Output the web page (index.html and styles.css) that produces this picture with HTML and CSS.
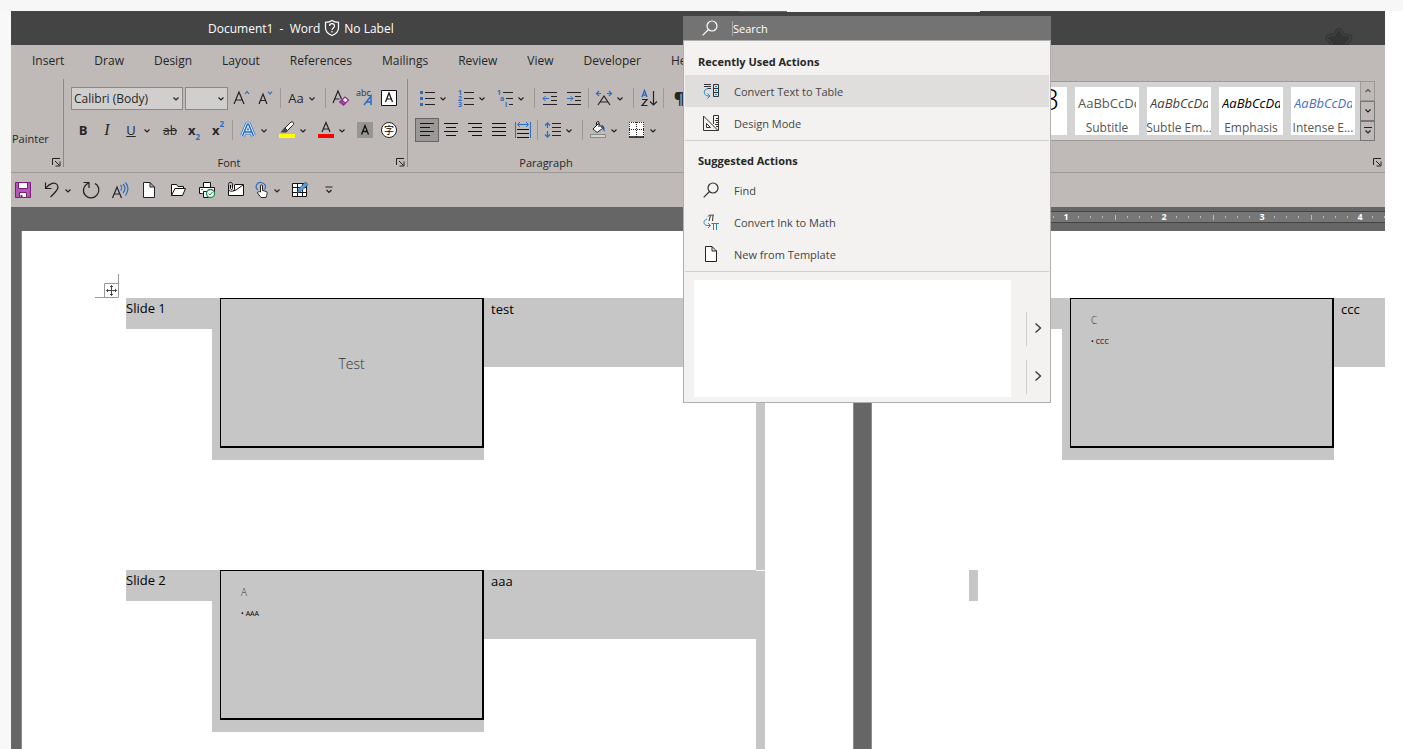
FILE: index.html
```html
<!DOCTYPE html>
<html lang="en">
<head>
    <meta charset="UTF-8">
    <meta name="viewport" content="width=device-width, initial-scale=1.0">
    <title>Document1 - Word</title>
    <link rel="stylesheet" href="styles.css">
</head>
<body>

    <svg class="sprite" aria-hidden="true">
        <symbol id="chev" viewBox="0 0 8 8"><path d="M1.5 2.5 4 5l2.5-2.5" fill="none" stroke="#222" stroke-width="1.2"/></symbol>
        <symbol id="launch" viewBox="0 0 9 9"><path d="M.5 7V.5H8M3 3l4 4M8 3.500V8H3.500" fill="none" stroke="#222"/></symbol>
        <symbol id="lens" viewBox="0 0 16 16"><circle cx="10" cy="6" r="5"/><path d="M6.500 9.500.7 15.300"/></symbol>
        <symbol id="file" viewBox="0 0 16 16"><path d="M2.500.5H9l4.500 4.500v10.500h-11zM9 .5V5h4.500" fill="#fff" stroke="#222"/></symbol>
    </svg>

    <div class="app">
        <header class="titlebar">
            <span>Document1&nbsp; -&nbsp; Word</span>
            <svg class="shield" width="16" height="18" viewBox="0 0 16 18" fill="none" stroke="#fff" stroke-width="1.200"><path d="M8 1.500C6 3 4 3.300 1.500 3.300V9c0 4 3 6 6.500 7.500C11.500 15 14.500 13 14.500 9V3.300C12 3.300 10 3 8 1.500z"/><path d="M5.500 7c0-3.200 5-3.200 5 0 0 2-2.500 2-2.500 4M8 12v1.500"/></svg>
            <span>No Label</span>
            <svg class="star" width="28" height="18" viewBox="0 0 28 18" stroke-linejoin="round"><path d="m14 5 3 5 6.500 1-4.500 4.500 1 6.500H8l1-6.500L4.500 11l6.500-1z" fill="#343434" stroke="#363636" stroke-width="8"/><path d="m14 5 3 5 6.500 1-4.500 4.500 1 6.500H8l1-6.500L4.500 11l6.500-1z" fill="#343434" stroke="#464646" stroke-width="5"/><path d="m14 5 3 5 6.500 1-4.500 4.500 1 6.500H8l1-6.500L4.500 11l6.500-1z" fill="#343434" stroke="#343434" stroke-width="3"/></svg>
        </header>

        <nav class="tabs">
            <a href="#">Insert</a>
            <a href="#">Draw</a>
            <a href="#">Design</a>
            <a href="#">Layout</a>
            <a href="#">References</a>
            <a href="#">Mailings</a>
            <a href="#">Review</a>
            <a href="#">View</a>
            <a href="#">Developer</a>
            <a href="#">Help</a>
        </nav>

        <div class="ribbon">
            <section class="group clipboard">
                <button class="painter">Painter</button>
                <div class="caption"><button class="launcher" aria-label="Clipboard settings"><svg width="9" height="9"><use href="#launch"/></svg></button></div>
            </section>

            <section class="group">
                <div class="row">
                    <span class="combo combo-font">
                        <select aria-label="Font"><option>Calibri (Body)</option></select>
                        <svg width="8" height="8"><use href="#chev"/></svg>
                    </span>
                    <span class="combo combo-size">
                        <select aria-label="Font size"><option></option></select>
                        <svg width="8" height="8"><use href="#chev"/></svg>
                    </span>
                    <button class="tool" aria-label="Grow font"><svg width="18" height="18" viewBox="0 0 18 18" fill="none" stroke="#222" stroke-width="1.200"><path d="M1 15 6 3l5 12M3 11h6"/><path d="m12 5 2-2.500L16 5" stroke="#2b6cc4"/></svg></button>
                    <button class="tool" aria-label="Shrink font"><svg width="18" height="18" viewBox="0 0 18 18" fill="none" stroke="#222" stroke-width="1.200"><path d="m2 15 4-10 4 10M3.500 11.500h5"/><path d="m11 2.500 2 2.500 2-2.500" stroke="#2b6cc4"/></svg></button>
                    <i class="sep"></i>
                    <span class="split"><button class="tool case">Aa</button><button class="arrow" aria-label="Case options"><svg width="8" height="8"><use href="#chev"/></svg></button></span>
                    <i class="sep"></i>
                    <button class="tool" aria-label="Clear formatting"><svg width="18" height="18" viewBox="0 0 18 18" fill="none" stroke="#222" stroke-width="1.200"><path d="M1 14 6 2l3.500 8M3 10h4.500"/><path d="m8 13 5-5 3.500 3-5 5z" fill="#fff" stroke="#92278f"/><path d="m8 13 2-2 3.500 3-2 2z" fill="#b14fb0" stroke="#92278f"/></svg></button>
                    <button class="tool" aria-label="Text styling"><svg width="20" height="20" viewBox="0 0 20 20"><text class="ico-abc" x="1" y="8">abc</text><path d="m9 17 7-9v9M11.500 14H16" fill="none" stroke="#2b6cc4" stroke-width="1.500"/></svg></button>
                    <button class="tool" aria-label="Character border"><svg width="18" height="18" viewBox="0 0 18 18" fill="none" stroke="#111"><path d="M1.500 1.500h15v15h-15z" fill="#fff"/><path d="M5.500 13 9 4l3.500 9M6.700 10h4.600" stroke-width="1.200"/></svg></button>
                </div>
                <div class="row">
                    <button class="tool bold">B</button>
                    <button class="tool italic">I</button>
                    <span class="split"><button class="tool underline">U</button><button class="arrow" aria-label="Underline options"><svg width="8" height="8"><use href="#chev"/></svg></button></span>
                    <button class="tool strike">ab</button>
                    <button class="tool bold">x<sub>2</sub></button>
                    <button class="tool bold">x<sup>2</sup></button>
                    <i class="sep"></i>
                    <span class="split"><button class="tool" aria-label="Text effects"><svg width="18" height="18" viewBox="0 0 18 18" fill="none" stroke-linejoin="round"><path d="m3.500 15 5-12h1l5 12M5.500 11h7" stroke="#4a8fdc" stroke-width="5"/><path d="m3.500 15 5-12h1l5 12M5.500 11h7" stroke="#fff" stroke-width="3"/><path d="m3.500 15 5-12h1l5 12M5.500 11h7" stroke="#2b66b8" stroke-width="1.500"/></svg></button><button class="arrow" aria-label="Effect options"><svg width="8" height="8"><use href="#chev"/></svg></button></span>
                    <span class="split"><button class="tool" aria-label="Highlight"><svg width="18" height="18" viewBox="0 0 18 18"><path d="M1 13h16v4H1z" fill="#ff0"/><path d="m7 7 6-6c2-.5 3 .5 2.500 2.500l-6 6z" fill="#fff" stroke="#222"/><path d="m6.500 6.500 3.500 3.500-2 1.500H2.500z" fill="#444"/></svg></button><button class="arrow" aria-label="Highlight options"><svg width="8" height="8"><use href="#chev"/></svg></button></span>
                    <span class="split"><button class="tool" aria-label="Font color"><svg width="18" height="18" viewBox="0 0 18 18"><path d="M1 13h16v4H1z" fill="red"/><path d="M5 11 9 1.500 13 11M6.500 8h5" fill="none" stroke="#222" stroke-width="1.200"/></svg></button><button class="arrow" aria-label="Color options"><svg width="8" height="8"><use href="#chev"/></svg></button></span>
                    <button class="tool" aria-label="Character shading"><svg width="18" height="18" viewBox="0 0 18 18"><path d="M1 1h16v16H1z" fill="#989694"/><path d="M5.500 13.500 9 4.500l3.500 9M6.700 10.500h4.600" fill="none" stroke="#111" stroke-width="1.300"/></svg></button>
                    <button class="tool" aria-label="Enclose characters"><svg width="18" height="18" viewBox="0 0 18 18"><circle cx="9" cy="9" r="7.500" fill="#fff" stroke="#222"/><text class="ico-cjk" x="9" y="13">字</text></svg></button>
                </div>
                <div class="caption">Font <button class="launcher" aria-label="Font settings"><svg width="9" height="9"><use href="#launch"/></svg></button></div>
            </section>

            <section class="group">
                <div class="row">
                    <span class="split"><button class="tool" aria-label="Bullets"><svg width="18" height="18" viewBox="0 0 18 18"><path d="M2 2h3v3H2zM2 8h3v3H2zM2 14h3v3H2z" fill="#2b6cc4"/><path d="M7 3.500h10M7 9.500h10M7 15.500h10" stroke="#222"/></svg></button><button class="arrow" aria-label="Bullet options"><svg width="8" height="8"><use href="#chev"/></svg></button></span>
                    <span class="split"><button class="tool" aria-label="Numbering"><svg width="18" height="22" viewBox="0 -2 18 22"><text class="ico-num" x="1" y="6">1</text><text class="ico-num" x="1" y="12">2</text><text class="ico-num" x="1" y="18">3</text><path d="M7 3.500h10M7 9.500h10M7 15.500h10" stroke="#222"/></svg></button><button class="arrow" aria-label="Numbering options"><svg width="8" height="8"><use href="#chev"/></svg></button></span>
                    <span class="split"><button class="tool" aria-label="Multilevel list"><svg width="18" height="22" viewBox="0 -2 18 22"><text class="ico-num" x="1" y="6">1</text><text class="ico-num" x="4" y="12">a</text><text class="ico-num" x="9" y="18">i</text><path d="M7 3.500h10M10 9.500h7M13 15.500h4" stroke="#222"/></svg></button><button class="arrow" aria-label="Multilevel options"><svg width="8" height="8"><use href="#chev"/></svg></button></span>
                    <i class="sep"></i>
                    <button class="tool" aria-label="Decrease indent"><svg width="18" height="18" viewBox="0 0 18 18" fill="none" stroke="#222"><path d="M2 3.500h14M10 7.500h6M10 11.500h6M2 15.500h14"/><path d="M8 9.500H2m2.500-2.500L2 9.500 4.500 12" stroke="#2b6cc4"/></svg></button>
                    <button class="tool" aria-label="Increase indent"><svg width="18" height="18" viewBox="0 0 18 18" fill="none" stroke="#222"><path d="M2 3.500h14M10 7.500h6M10 11.500h6M2 15.500h14"/><path d="M2 9.500h6M5.500 7 8 9.500 5.500 12" stroke="#2b6cc4"/></svg></button>
                    <i class="sep"></i>
                    <span class="split"><button class="tool" aria-label="Asian layout"><svg width="18" height="18" viewBox="0 0 18 18" fill="none" stroke="#222" stroke-width="1.200"><path d="M3 16 9 7l6 9M5 13h8"/><path d="M6 4.500H1.500M4 2 1.500 4.500 4 7M12 4.500h4.500M14 2l2.500 2.500L14 7" stroke="#2b6cc4"/></svg></button><button class="arrow" aria-label="Layout options"><svg width="8" height="8"><use href="#chev"/></svg></button></span>
                    <i class="sep"></i>
                    <button class="tool" aria-label="Sort"><svg width="18" height="18" viewBox="0 0 18 18" fill="none" stroke="#222" stroke-width="1.200"><path d="m2 8 2.500-6.500L7 8M3 6h3" stroke="#2b6cc4" stroke-width="1.400"/><path d="M2 10.500h5l-5 6h5.500M13.500 2v14M10 12.500l3.500 3.500 3.500-3.500"/></svg></button>
                    <i class="sep"></i>
                    <button class="tool pilcrow">¶</button>
                </div>
                <div class="row">
                    <button class="tool pressed" aria-label="Align left"><svg width="18" height="18" viewBox="0 0 18 18" stroke="#111"><path d="M2 2.500h14M2 6.500h10M2 10.500h14M2 14.500h10"/></svg></button>
                    <button class="tool" aria-label="Center"><svg width="18" height="18" viewBox="0 0 18 18" stroke="#111"><path d="M2 2.500h14M4 6.500h10M2 10.500h14M4 14.500h10"/></svg></button>
                    <button class="tool" aria-label="Align right"><svg width="18" height="18" viewBox="0 0 18 18" stroke="#111"><path d="M2 2.500h14M6 6.500h10M2 10.500h14M6 14.500h10"/></svg></button>
                    <button class="tool" aria-label="Justify"><svg width="18" height="18" viewBox="0 0 18 18" stroke="#111"><path d="M2 2.500h14M2 6.500h14M2 10.500h14M2 14.500h14"/></svg></button>
                    <button class="tool" aria-label="Distribute"><svg width="18" height="18" viewBox="0 0 18 18" fill="none" stroke="#111"><path d="M3 8.500h12M3 12.500h12M3 16.500h12"/><path d="M1.500 1v16M16.500 1v16M4 3.500h10M6 1 3.500 3.500 6 6M12 1l2.500 2.500L12 6" stroke="#2b6cc4"/></svg></button>
                    <i class="sep"></i>
                    <span class="split"><button class="tool" aria-label="Line spacing"><svg width="18" height="18" viewBox="0 0 18 18" fill="none" stroke="#222"><path d="M8 2.500h9M8 6.500h9M8 10.500h9M8 14.500h9"/><path d="M3.500 2v5M1 4.500 3.500 2 6 4.500M3.500 10v6M1 13.500 3.500 16 6 13.500" stroke="#2b6cc4" stroke-width="1.300"/></svg></button><button class="arrow" aria-label="Spacing options"><svg width="8" height="8"><use href="#chev"/></svg></button></span>
                    <i class="sep"></i>
                    <span class="split"><button class="tool" aria-label="Shading"><svg width="18" height="18" viewBox="0 0 18 18"><path d="M1.500 13.500h15v3h-15z" fill="#d4d4d4" stroke="#888"/><path d="m4 8 5.500-5.500 4 5L8 11.500z" fill="#fff" stroke="#222"/><path d="M10 6V1.500C10 0 7.500 0 7.500 2v2" fill="none" stroke="#222"/><path d="M12 4c3 0 4 2 3.500 7-1-2-2-3-2-3.500z" fill="#2b579a"/></svg></button><button class="arrow" aria-label="Shading options"><svg width="8" height="8"><use href="#chev"/></svg></button></span>
                    <span class="split"><button class="tool" aria-label="Borders"><svg width="18" height="18" viewBox="0 0 18 18"><path d="M1 1h15v15H1z" fill="#fff"/><path d="M1 1.500h15M1 8.500h15M1.500 1v15M8.500 1v15M15.500 1v15" stroke="#222" stroke-dasharray="1 1"/><path d="M1 16h15" stroke="#111" stroke-width="1.500"/></svg></button><button class="arrow" aria-label="Border options"><svg width="8" height="8"><use href="#chev"/></svg></button></span>
                </div>
                <div class="caption">Paragraph</div>
            </section>

            <section class="group styles">
                <div class="gallery">
                    <button class="style"><span class="sample title">AaB</span><span>Title</span></button>
                    <button class="style"><span class="sample">AaBbCcDd</span><span>Subtitle</span></button>
                    <button class="style"><span class="sample slanted">AaBbCcDd</span><span>Subtle Em...</span></button>
                    <button class="style"><span class="sample slanted strong">AaBbCcDd</span><span>Emphasis</span></button>
                    <button class="style"><span class="sample slanted blue">AaBbCcDd</span><span>Intense E...</span></button>
                    <div class="scroller">
                        <button class="off" aria-label="Previous styles"><svg width="8" height="8" viewBox="0 0 8 8"><path d="M1.500 5 4 2.500 6.500 5" fill="none" stroke="#555" stroke-width="1.200"/></svg></button>
                        <button aria-label="Next styles"><svg width="8" height="8"><use href="#chev"/></svg></button>
                        <button aria-label="More styles"><svg width="8" height="8" viewBox="0 0 8 8"><path d="M0 .5h8M1.500 3.500 4 6l2.500-2.500" fill="none" stroke="#222" stroke-width="1.200"/></svg></button>
                    </div>
                </div>
                <div class="caption"><button class="launcher" aria-label="Style settings"><svg width="9" height="9"><use href="#launch"/></svg></button></div>
            </section>
        </div>

        <div class="quickbar">
            <button class="tool" aria-label="Save"><svg width="18" height="18" viewBox="0 0 18 18" stroke="#7b1f7a"><path d="M1.500 1.500h15v15h-15z" fill="#b455b8"/><path d="M4.500 1.500h9v6h-9zM5.500 11.500h7v5h-7z" fill="#fff"/><path d="M7.500 14v2.500" stroke-width="2"/></svg></button>
            <span class="split"><button class="tool" aria-label="Undo"><svg width="18" height="18" viewBox="0 0 18 18" fill="none" stroke="#222" stroke-width="1.200"><path d="M2.500 1.500v6h6M2.500 7.500C7 1.500 12 1 14 3.500s1.500 5-6.500 12.500"/></svg></button><button class="arrow" aria-label="Undo options"><svg width="8" height="8"><use href="#chev"/></svg></button></span>
            <button class="tool" aria-label="Redo"><svg width="18" height="18" viewBox="0 0 18 18" fill="none" stroke="#222" stroke-width="1.200"><path d="M1.500 1.500H7V7M6.500 2C1 5 0 11 3.500 14.500s8.500 3 11.500-.5S17.500 5 13 2.500"/></svg></button>
            <button class="tool" aria-label="Read aloud"><svg width="18" height="18" viewBox="0 0 18 18" fill="none" stroke="#222" stroke-width="1.200"><path d="M1.500 17 6 6l4.500 11M3 13h6"/><path d="M9.500 4c1.500 1.500 1.500 4 0 5.500M12 3c2.500 2.500 2.500 6 0 9M14.500 1.500c3 3.500 3 8.500 0 13" stroke="#2b6cc4"/></svg></button>
            <button class="tool" aria-label="New"><svg width="16" height="16"><use href="#file"/></svg></button>
            <button class="tool" aria-label="Open"><svg width="18" height="18" viewBox="0 0 18 18" fill="none" stroke="#111"><path d="M2.500 14.500v-11h5l1.500 2h5.500v2" fill="#fff"/><path d="m2.500 14.500 3.500-7h10.500l-3 7z" fill="#fff"/></svg></button>
            <button class="tool" aria-label="Quick print"><svg width="18" height="18" viewBox="0 0 18 18" fill="#fff" stroke="#111"><path d="M5.500 6.500v-5h7v5M4.500 12.500h-3v-6h15v6M5.500 10.500h6v6h-6z"/><path d="M3.500 8.500h1"/><circle cx="12.500" cy="12.500" r="4" stroke="#1e8a48" stroke-width="1.300"/><path d="m10.500 12.500 1.500 1.500 2.500-3" fill="none" stroke="#1e8a48"/></svg></button>
            <button class="tool" aria-label="Email"><svg width="18" height="18" viewBox="0 0 18 18" fill="none" stroke="#111"><path d="M1.500 9v5.500h15v-11H8" fill="#fff"/><path d="m6 10 3-1 7-5"/><path d="M3.500 4v3.500c0 1.500 2 1.500 2 0v-4c0-3-4-3-4 0V8c0 3 6 3 6 0V3.500"/></svg></button>
            <span class="split"><button class="tool narrow" aria-label="Touch mode"><svg width="18" height="18" viewBox="0 0 18 18"><path d="M4 9C0 6 3 1 7 1.500s6 4 3.500 7" fill="none" stroke="#2b6cc4" stroke-width="1.200"/><path d="M6.500 11V5c0-1.500 2-1.500 2 0v4.500l4 1c1 .5.5 3.500-.5 6H7l-3.500-4.500c0-1.500 1.500-1.500 3-1z" fill="#fff" stroke="#222"/></svg></button><button class="arrow" aria-label="Mode options"><svg width="8" height="8"><use href="#chev"/></svg></button></span>
            <button class="tool" aria-label="Draw table"><svg width="18" height="18" viewBox="0 0 18 18"><path d="M1.500 2.500h14v13h-14zM1.500 6.500h14M1.500 11.500h14M6.500 2.500v13M11.500 2.500v13" fill="#fff" stroke="#111"/><path d="m6.500 11.500 1-3.500 7-7 2.500 2.500-7 7z" fill="#5b9bd5" stroke="#2b579a" stroke-width=".7"/></svg></button>
            <button class="tool" aria-label="Customize toolbar"><svg width="8" height="8" viewBox="0 0 8 8"><path d="M.5 1h7M1.500 4 4 6.500 6.500 4" fill="none" stroke="#222" stroke-width="1.200"/></svg></button>
        </div>

        <main class="workspace">
            <div class="ruler-band">
                <div class="ruler">
                    <div class="inch"><b></b><i></i><i></i><i></i><i class="half"></i><i></i><i></i><i></i></div>
                    <div class="inch"><b>1</b><i></i><i></i><i></i><i class="half"></i><i></i><i></i><i></i></div>
                    <div class="inch"><b>2</b><i></i><i></i><i></i><i class="half"></i><i></i><i></i><i></i></div>
                    <div class="inch"><b>3</b><i></i><i></i><i></i><i class="half"></i><i></i><i></i><i></i></div>
                    <div class="inch"><b>4</b><i></i><i></i><i></i><i class="half"></i><i></i><i></i><i></i></div>
                </div>
            </div>

            <div class="pages">
                <article class="page">
                    <svg class="anchor" width="24" height="24" viewBox="0 0 24 24" fill="none" stroke="#999"><path d="M23.500 0v23.500H0M9.500 23.500v-14h14"/><path d="M16.500 11.500v10M11.500 16.500h10M15 13l1.500-1.500L18 13M15 20l1.500 1.500L18 20M13 15l-1.500 1.500L13 18M20 15l1.500 1.500L20 18" stroke="#444"/></svg>
                    <table class="handout">
                        <tr>
                            <td class="col-label"><div class="mark">Slide 1</div></td>
                            <td class="col-slide"><div class="mark"><div class="slide cover">Test</div></div></td>
                            <td class="col-note"><div class="mark">test</div></td>
                            <td class="col-end"></td>
                        </tr>
                        <tr>
                            <td class="col-label"><div class="mark">Slide 2</div></td>
                            <td class="col-slide"><div class="mark"><div class="slide"><h3>A</h3><ul><li>AAA</li></ul></div></div></td>
                            <td class="col-note"><div class="mark">aaa</div></td>
                            <td class="col-end"></td>
                        </tr>
                    </table>
                </article>

                <article class="page">
                    <table class="handout">
                        <tr>
                            <td class="col-label"><div class="mark"></div></td>
                            <td class="col-slide"><div class="mark"><div class="slide"><h3>C</h3><ul><li>CCC</li></ul></div></div></td>
                            <td class="col-note"><div class="mark">ccc</div></td>
                            <td class="col-end"></td>
                        </tr>
                    </table>
                    <p class="end-mark"></p>
                </article>
            </div>
        </main>

        <div class="accent"></div>

        <div class="search">
            <label class="search-box">
                <svg width="16" height="16" fill="none" stroke="#fff" stroke-width="1.200"><use href="#lens"/></svg>
                <input type="text" placeholder="Search" aria-label="Search">
            </label>
            <div class="results">
                <h2>Recently Used Actions</h2>
                <button class="action current"><svg width="16" height="16" viewBox="0 0 16 16" fill="none" stroke="#333"><path d="M1 1.500h7M1 3.500h7M4 5.500h4M10.500 1.500h5v12h-5zM10.500 5.500h5M10.500 9.500h5"/><path d="M5 5.500c-5 .5-5 7 0 7.500h2M4.500 10.500 7 13l-2.500 2.500M12 3.500h2M12 7.500h2M12 11.500h2" stroke="#1e88d0"/></svg>Convert Text to Table</button>
                <button class="action"><svg width="16" height="16" viewBox="0 0 16 16" fill="none" stroke="#333"><path d="M.5 1v14.500H15L.5 1M3.500 8.500v4h4zM10.500 9V.5h5v15H15M13 3.500h2.500M12 5.500h3.500M13 7.500h2.500M12 9.500h3.500M13 11.500h2.500"/></svg>Design Mode</button>
                <hr>
                <h2>Suggested Actions</h2>
                <button class="action"><svg width="16" height="16" fill="none" stroke="#333" stroke-width="1.200"><use href="#lens"/></svg>Find</button>
                <button class="action"><svg width="16" height="16" viewBox="0 0 16 16" fill="none" stroke="#333"><path d="M5 2.500c1-2 2-1 6-1.500M7.500 1.500 6 7M10 1.500 9.500 7"/><path d="M4 5c-4 1-4 6 0 6.500h3M5 9l2.500 2.500L5 14M8.500 9.500h7.500M10.500 9.500v6.500M13.500 9.500V16" stroke="#1e88d0"/></svg>Convert Ink to Math</button>
                <button class="action"><svg width="16" height="16"><use href="#file"/></svg>New from Template</button>
                <hr>
                <div class="preview">
                    <div class="blank"></div>
                    <div class="more">
                        <button aria-label="More results"><svg width="8" height="12" viewBox="0 0 8 12"><path d="m1.500 1.500 5 4.500-5 4.500" fill="none" stroke="#333" stroke-width="1.300"/></svg></button>
                        <button aria-label="More help"><svg width="8" height="12" viewBox="0 0 8 12"><path d="m1.500 1.500 5 4.500-5 4.500" fill="none" stroke="#333" stroke-width="1.300"/></svg></button>
                    </div>
                </div>
            </div>
        </div>
    </div>

</body>
</html>
```
FILE: styles.css
```css
* {
    box-sizing: border-box;
}

body {
    margin: 0;
    height: 100vh;
    padding: 11px 18px 0 11px;
    overflow: hidden;
    background: linear-gradient(#f7f7f7, #f7f7f7) 0 0 / 100% 11px no-repeat, linear-gradient(#f8f8f8, #f8f8f8) 0 0 / 11px 100% no-repeat, #fff;
    font-family: "Open Sans", "Noto Sans", sans-serif;
    font-size: 12px;
    color: #262626;
}

button {
    padding: 0;
    border: 0;
    background: none;
    font: inherit;
    color: inherit;
}

.sprite {
    display: none;
}

.app {
    position: relative;
    display: flex;
    flex-direction: column;
    height: 100%;
}

/* title bar */
.titlebar {
    display: flex;
    align-items: center;
    height: 34px;
    padding-left: 197px;
    background: #444;
    color: #fff;
}

.shield {
    margin: 0 4px;
}

.star {
    align-self: flex-end;
    margin: 0 32px 0 auto;
}

.accent {
    position: absolute;
    top: 0;
    left: 728px;
    width: 241px;
    height: 1px;
    background: linear-gradient(90deg, #1979ca 48px, #f7f7f7 48px);
}

/* ribbon */
.tabs {
    display: flex;
    height: 34px;
    padding-left: 6px;
    background: #bfbab7;
}

.tabs a {
    padding: 0 15px;
    line-height: 31px;
    color: inherit;
    text-decoration: none;
}

.ribbon {
    display: flex;
    height: 94px;
    padding-bottom: 5px;
    border-bottom: 1px solid #9c9996;
    background: #bfbab7;
}

.group {
    display: flex;
    flex-direction: column;
    gap: 8px;
    padding: 7px 2px 0 7px;
    border-right: 1px solid #8a8784;
}

.clipboard {
    width: 53px;
    padding: 50px 2px 0 1px;
}

.painter {
    height: 20px;
    font-size: 11px;
    text-align: left;
}

.row {
    display: flex;
    align-items: center;
    height: 24px;
    padding-right: 4px;
}

.caption {
    position: relative;
    height: 14px;
    margin: auto 0 -3px;
    padding-right: 18px;
    line-height: 14px;
    font-size: 11px;
    text-align: center;
}

.launcher {
    position: absolute;
    right: 0;
    bottom: 3px;
    height: 9px;
    line-height: 0;
}

.tool {
    display: flex;
    align-items: center;
    justify-content: center;
    flex: none;
    width: 24px;
    height: 24px;
    font-size: 13px;
}

.narrow {
    width: 20px;
}

.split {
    display: flex;
    align-items: center;
    margin-right: 7px;
}

.arrow {
    width: 8px;
    height: 24px;
}

.sep {
    width: 1px;
    height: 20px;
    margin: 0 3px 0 2px;
    background: #9c9996;
}

.pressed {
    border: 1px solid #666;
    background: #9b9997;
}

.bold {
    font-weight: bold;
}

.bold sub,
.bold sup {
    font-size: 8px;
    color: #2b6cc4;
}

.bold sub {
    align-self: flex-end;
}

.bold sup {
    align-self: flex-start;
}

.italic {
    font-family: "Liberation Serif", serif;
    font-size: 16px;
    font-style: italic;
}

.underline {
    text-decoration: underline;
}

.strike {
    font-size: 12px;
    text-decoration: line-through;
}

.pilcrow {
    font-size: 16px;
    font-weight: bold;
}

.ico-abc {
    font-size: 9px;
    fill: #333;
}

.ico-num {
    font-size: 7px;
    font-weight: bold;
    fill: #2b6cc4;
}

.ico-cjk {
    font-family: "Noto Sans CJK SC", sans-serif;
    font-size: 10px;
    text-anchor: middle;
}

.combo {
    position: relative;
    height: 23px;
    margin-right: 2px;
}

.combo select {
    width: 100%;
    height: 100%;
    padding: 0 2px;
    border: 1px solid #8a8784;
    border-radius: 0;
    appearance: none;
    background: #d1cfcd;
    font: inherit;
    color: inherit;
}

.combo svg {
    position: absolute;
    top: 8px;
    right: 3px;
    pointer-events: none;
}

.combo-font {
    width: 112px;
}

.combo-size {
    width: 43px;
}

/* style gallery */
.styles {
    margin-left: auto;
    padding: 2px 3px 0 0;
    border: 0;
}

.gallery {
    display: flex;
    gap: 8px;
    height: 60px;
    margin-right: 7px;
    padding: 5px 0 5px 8px;
    border: 1px solid #9c9996;
    border-right: 0;
    background: #d4d4d4;
}

.style {
    display: flex;
    flex-direction: column;
    justify-content: space-between;
    align-items: center;
    width: 64px;
    height: 48px;
    overflow: hidden;
    background: #fff;
    color: #555;
    line-height: 15px;
    white-space: nowrap;
}

.sample {
    width: 58px;
    padding-top: 9px;
    overflow: hidden;
    font-size: 13px;
    text-align: left;
}

.title {
    padding: 0;
    line-height: 24px;
    font-size: 30px;
    font-weight: 300;
    color: #000;
}

.slanted {
    font-style: italic;
    color: #404040;
}

.strong {
    color: #000;
}

.blue {
    color: #4472c4;
}

.scroller {
    display: flex;
    flex-direction: column;
    width: 15px;
    margin: -6px 0 -6px -3px;
}

.scroller button {
    flex: 1;
    border: 1px solid #777;
    background: #bfbab7;
    line-height: 0;
}

.scroller .off {
    border-color: #9c9996;
}

/* quick access */
.quickbar {
    display: flex;
    align-items: center;
    gap: 5px;
    height: 34px;
    background: #bfbab7;
}

.quickbar .split {
    margin-right: 2px;
}

/* document */
.workspace {
    display: flex;
    flex: 1;
    flex-direction: column;
    min-height: 0;
    overflow: hidden;
    background: #666;
}

.ruler-band {
    height: 24px;
    padding: 4px 0 0 951px;
}

.ruler {
    display: flex;
    height: 12px;
    overflow: hidden;
    border: solid #444;
    border-width: 1px 0;
    background: #777;
}

.inch {
    display: grid;
    grid-template-columns: repeat(8, 1fr);
    flex: none;
    place-items: center;
    width: 98px;
    color: #fff;
}

.inch b {
    font-size: 9px;
    line-height: 10px;
}

.inch i {
    width: 1px;
    height: 2px;
    background: #bbb;
}

.inch .half {
    height: 5px;
}

.pages {
    display: flex;
    flex: 1;
    gap: 17px;
    min-height: 0;
    padding-left: 10px;
}

.page {
    position: relative;
    flex: none;
    width: 833px;
    padding: 67px 97px 0;
    border: solid #8c8c8c;
    border-width: 0 1px;
    background: #fff;
}

.page:last-child {
    flex: 1 1 0;
    min-width: 0;
    padding-right: 0;
    border-right: 0;
    overflow: hidden;
}

.anchor {
    position: absolute;
    top: 43px;
    left: 73px;
}

.handout {
    table-layout: fixed;
    width: 639px;
    margin-left: 7px;
    border-collapse: collapse;
    font-size: 13px;
    color: #000;
}

.handout td {
    height: 272px;
    padding: 0;
    vertical-align: top;
}

.mark {
    background: #c6c6c6;
    line-height: 21px;
}

.col-label {
    width: 86px;
}

.col-label .mark {
    height: 31px;
}

.col-slide {
    width: 272px;
}

.col-slide .mark {
    height: 162px;
    padding-left: 8px;
}

.col-note {
    width: 272px;
}

.col-note .mark {
    height: 69px;
    padding: 1px 7px;
}

.col-end {
    width: 9px;
    background: #c6c6c6;
}

tr + tr .col-end {
    background: linear-gradient(#fff 1px, #c6c6c6 1px);
}

.slide {
    height: 150px;
    padding: 12px 20px;
    border: solid #000;
    border-width: 1px 2px 2px 1px;
    color: #333;
}

.cover {
    padding: 0;
    line-height: 130px;
    font-size: 14px;
    font-weight: 300;
    text-align: center;
}

.slide h3 {
    margin: 0;
    line-height: 18px;
    font-size: 10px;
    font-weight: 300;
}

.slide ul {
    margin: 7px 0 0;
    padding: 0;
    list-style: none;
    line-height: 12px;
    font-size: 7px;
    color: #000;
}

.slide li::before {
    content: "•";
    margin-right: 2px;
}

.end-mark {
    width: 9px;
    height: 31px;
    margin: 0;
    background: #c6c6c6;
}

/* search menu */
.search {
    position: absolute;
    top: 5px;
    left: 672px;
    width: 368px;
    font-size: 11px;
}

.search-box {
    display: flex;
    align-items: center;
    gap: 14px;
    height: 24px;
    padding-left: 19px;
    background: #737373;
}

.search-box input {
    flex: 1;
    min-width: 0;
    padding: 0;
    border: 0;
    border-left: 1px solid #aaa;
    outline: 0;
    background: none;
    font: inherit;
    color: #fff;
}

.search-box input::placeholder {
    color: #fff;
}

.results {
    padding: 1px 1px 0;
    border: 1px solid #b1afad;
    background: #f3f2f1;
}

.results h2 {
    margin: 0;
    padding: 7px 0 0 13px;
    line-height: 26px;
    font-size: 11px;
}

.results hr {
    height: 1px;
    margin: 1px 0 0;
    border: 0;
    background: #d2d0ce;
}

.action {
    display: flex;
    align-items: center;
    gap: 15px;
    width: 100%;
    height: 32px;
    padding-left: 18px;
    color: #444;
}

.current {
    background: #dfdedd;
}

.preview {
    display: flex;
    justify-content: space-between;
    padding: 8px 0 5px 9px;
}

.blank {
    flex: 1;
    height: 117px;
    background: #fff;
}

.more {
    display: flex;
    flex-direction: column;
    gap: 14px;
    width: 23px;
    margin: 32px 0 0 15px;
}

.more button {
    height: 34px;
    border-left: 1px solid #d2d0ce;
}
```
